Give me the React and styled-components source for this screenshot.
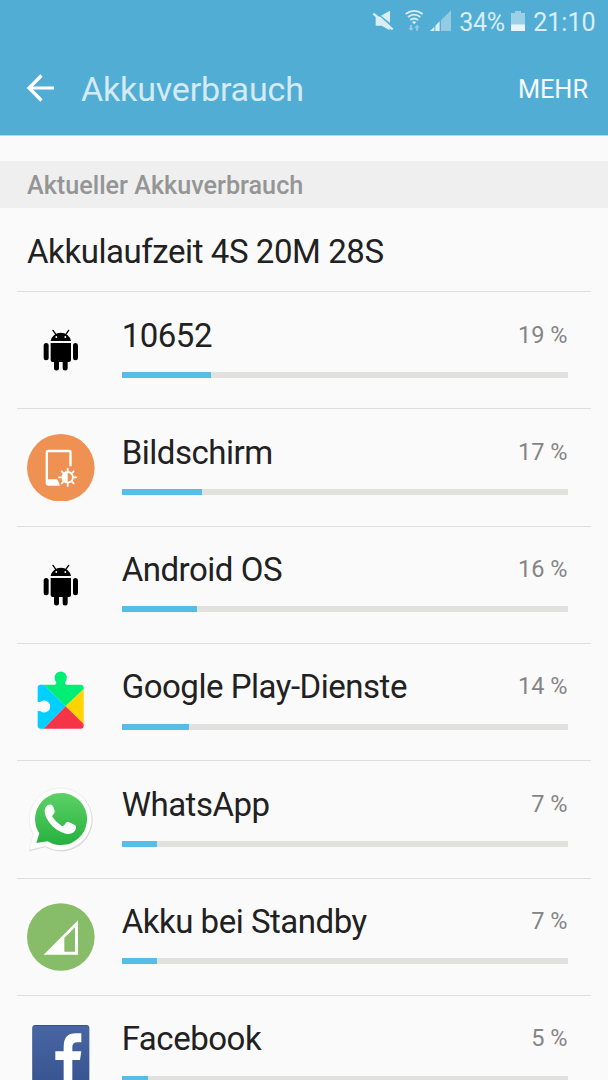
import React from 'react';
import styled, { createGlobalStyle } from 'styled-components';

const GlobalStyle = createGlobalStyle`
    html,
    body {
        margin: 0;
        padding: 0;
        background: #fafafa;
    }

    body {
        font-family: Roboto, 'Noto Sans', sans-serif;
        height: 1080px;
        overflow: hidden;
    }
`;

const Screen = styled.div`
    background: #fafafa;
    box-sizing: border-box;
    height: 1080px;
    overflow: hidden;
    width: 608px;
`;

const Header = styled.header`
    background: #52add4;
    border-bottom: 1px solid #c3d3da;
    box-sizing: border-box;
    height: 136px;
`;

const StatusBar = styled.div`
    align-items: center;
    color: #d9eef6;
    display: flex;
    height: 43px;
    justify-content: flex-end;
    padding-right: 12.5px;

    svg {
        display: block;
        flex: none;
        margin-bottom: 1px;
    }
`;

const StatusText = styled.span`
    font-size: 25px;
    letter-spacing: ${props => props.$spacing || 'normal'};
    line-height: 43px;
    margin-left: ${props => props.$gap};
    margin-right: ${props => props.$after || '0'};
    padding-top: 2px;
    white-space: nowrap;
`;

const AppBar = styled.div`
    align-items: center;
    box-sizing: border-box;
    display: flex;
    height: 92px;
    padding: 0 20px 0 26px;
`;

const Back = styled.button`
    appearance: none;
    background: none;
    border: 0;
    height: 30px;
    margin: 0 26px 3px 0;
    padding: 0;
    width: 29px;

    svg {
        display: block;
    }
`;

const Title = styled.h1`
    color: #d4ebf5;
    flex: 1;
    font-size: 34px;
    font-weight: 400;
    letter-spacing: -0.17px;
    line-height: 40px;
    margin: 0;
`;

const More = styled.button`
    appearance: none;
    background: none;
    border: 0;
    color: #f6fbfd;
    font-family: inherit;
    font-size: 25.3px;
    line-height: 40px;
    padding: 1px 0 0;
`;

const SectionTitle = styled.h2`
    background: #efefef;
    color: #959595;
    font-size: 25.2px;
    font-weight: 500;
    height: 47px;
    line-height: 50px;
    margin: 25px 0 0;
    padding-left: 27px;
`;

const Runtime = styled.div`
    box-sizing: border-box;
    color: #212121;
    font-size: 33px;
    height: 83px;
    letter-spacing: -0.43px;
    line-height: 40px;
    padding: 24px 0 0 27px;
`;

const List = styled.ul`
    list-style: none;
    margin: 0 17px;
    padding: 0;
`;

const Item = styled.li`
    align-items: center;
    border-top: 1px solid #dedede;
    box-sizing: border-box;
    display: flex;
    height: 117.33px;
    padding: 0 23.5px 0 10px;

    & > svg {
        display: block;
        flex: none;
        margin-right: 27px;
    }
`;

const Body = styled.div`
    align-self: flex-start;
    flex: 1;
    padding-top: 23.5px;
`;

const Labels = styled.div`
    align-items: flex-start;
    display: flex;
    height: 40px;
    justify-content: space-between;
`;

const Name = styled.span`
    color: #212121;
    font-size: 33px;
    letter-spacing: -0.48px;
    line-height: 40px;
`;

const Percent = styled.span`
    color: #858585;
    font-size: 23.5px;
    line-height: 38px;
`;

const Track = styled.div`
    background: #e1e1e0;
    height: 6px;
    margin-top: 16.25px;
`;

const Fill = styled.div`
    background: #56bee6;
    height: 100%;
`;

const IconBase = ({ viewBox, children }) => (
    <svg width="67.67" height="67.67" viewBox={viewBox}>
        {children}
    </svg>
);

const AndroidIcon = () => (
    <IconBase viewBox="21 -12 203 203">
        <path d="M92 63a31 30 0 0 1 61 0z" />
        <path
            d="M99 31l9 13M146 31l-9 13"
            stroke="#000"
            strokeWidth="4"
            strokeLinecap="round"
        />
        <circle cx="109" cy="51" r="2.8" fill="#fff" />
        <circle cx="136" cy="51" r="2.8" fill="#fff" />
        <path d="M92 69h61v51q0 6-6 6h-4v18a7.5 7.5 0 0 1-15 0v-18h-11v18a7.5 7.5 0 0 1-15 0v-18h-4q-6 0-6-6z" />
        <rect x="71" y="69" width="15" height="52" rx="7.5" />
        <rect x="159" y="69" width="15" height="52" rx="7.5" />
    </IconBase>
);

const ScreenIcon = () => (
    <IconBase viewBox="21 25 203 203">
        <circle cx="122.5" cy="126.5" r="101.5" fill="#ef9153" />
        <path
            fill="#fff"
            fillRule="evenodd"
            d="M84 72h64q7 0 7 7v43h-7V80H84v81h28l8 19H84q-7 0-7-7V79q0-7 7-7z"
        />
        <g stroke="#fff" strokeWidth="5.5" strokeLinecap="round">
            <path d="M143 129v6M143 175v6M117 155h6M163 155h6M125 137l4 4M157 169l4 4M161 137l-4 4M129 169l-4 4" />
        </g>
        <circle
            cx="143"
            cy="155"
            r="16"
            fill="#ef9153"
            stroke="#fff"
            strokeWidth="5.5"
        />
        <path d="M143 139a16 16 0 0 0 0 32z" fill="#fff" />
    </IconBase>
);

const PlayServicesIcon = () => (
    <IconBase viewBox="21 25 203 203">
        <path
            d="M72 75L137 140 71 207H62q-9 0-9-9v-44q6-1 9 1a18 18 0 1 0 0-29q-4 2-9 0V84q0-9 9-9z"
            fill="#00d0ff"
        />
        <path
            d="M72 75h32q7-2 4-9a18.5 18.5 0 1 1 28 0q-3 7 4 9h43q5 0 8 6v7L137 140z"
            fill="#00ee76"
        />
        <path d="M191 88v105L137 140z" fill="#ffd400" />
        <path d="M71 207l66-67 54 53v5q0 9-9 9z" fill="#f63448" />
    </IconBase>
);

const WhatsAppIcon = () => (
    <IconBase viewBox="22 17 203 203">
        <defs>
            <linearGradient id="wa" x1="0" y1="0" x2="0" y2="1">
                <stop offset="0" stopColor="#5dd167" />
                <stop offset="1" stopColor="#26b13d" />
            </linearGradient>
        </defs>
        <path
            d="M29 213l13-49a94 94 0 1 1 35 36z"
            fill="#bdbdbd"
            opacity=".65"
        />
        <path
            d="M28 210l13-48a93.5 93.5 0 1 1 36 36z"
            fill="#fff"
            stroke="#dedede"
            strokeWidth="1.5"
        />
        <path d="M50 188l9-29a78 78 0 1 1 25 24z" fill="url(#wa)" />
        <path
            d="M83 75q7-4 12-2 4 1 6 7l4 12q1 5-3 9l-5 7q10 17 28 28 5 3 9-2l6-8q3-3 7-1l20 10q3 2 2 7-2 13-13 17-14 5-30-3-31-14-46-44-5-10-5-20 0-10 8-17z"
            fill="#fff"
        />
    </IconBase>
);

const StandbyIcon = () => (
    <IconBase viewBox="21 22 203 203">
        <circle cx="122.5" cy="124" r="101.5" fill="#87bd68" />
        <path
            d="M71 177L174 74v103zM133 127v41h32V95z"
            fill="#fff"
            fillRule="evenodd"
        />
    </IconBase>
);

const FacebookIcon = () => (
    <IconBase viewBox="21 30 203 203">
        <defs>
            <linearGradient id="fb" x1="0" y1="0" x2="0" y2="1">
                <stop offset="0" stopColor="#4866a3" />
                <stop offset="1" stopColor="#385592" />
            </linearGradient>
        </defs>
        <rect x="37" y="45" width="171" height="171" rx="9" fill="#304a83" />
        <rect x="38" y="47" width="169" height="168" rx="8" fill="url(#fb)" />
        <path
            d="M131 216v-66h-25v-26h25v-14q0-40 36-40h17v27h-12q-15 0-15 14v13h27l-4 26h-23v66z"
            fill="#fff"
        />
    </IconBase>
);

const apps = [
    { name: '10652', percent: 19, fill: 20, icon: AndroidIcon },
    { name: 'Bildschirm', percent: 17, fill: 18, icon: ScreenIcon },
    { name: 'Android OS', percent: 16, fill: 17, icon: AndroidIcon },
    { name: 'Google Play-Dienste', percent: 14, fill: 15, icon: PlayServicesIcon },
    { name: 'WhatsApp', percent: 7, fill: 8, icon: WhatsAppIcon },
    { name: 'Akku bei Standby', percent: 7, fill: 8, icon: StandbyIcon },
    { name: 'Facebook', percent: 5, fill: 6, icon: FacebookIcon }
];

// mute, wifi and signal share one drawing, the battery sits between the texts
const StatusIcons = () => (
    <svg width="84" height="24" viewBox="30 27 252 72" fill="#d9eef6">
        <path d="M44 50h14l28 26v15L62 77H44z" />
        <path d="M60 47l27-15v37z" />
        <path d="M37 41l58 47" stroke="#d9eef6" strokeWidth="7" />
        <g fill="none" stroke="#d9eef6" strokeWidth="5.5">
            <path d="M134 42q25-19 51 0M141 51q18-14 37 0M148 60q11-9 23 0" />
        </g>
        <path d="M153 66q6-4 13 0l-6.5 7z" />
        <g fill="#93cbe3">
            <path d="M147 75h6v9h5l-8 9-8-9h5zM165 92h6v-9h5l-8-9-8 9h5z" />
            <path d="M240 61l30-30v62h-30z" />
        </g>
        <path d="M207 93l13-13v13zM223 77l13-13v29h-13z" />
    </svg>
);

const Battery = () => (
    <svg width="14" height="20" viewBox="0 0 14 20">
        <path d="M4 0h6v2h4v18H0V2h4z" fill="#9bd0e6" />
        <path d="M0 13.5h14V20H0z" fill="#e9f5fa" />
    </svg>
);

const AppRow = ({ name, percent, fill, icon: Icon }) => (
    <Item>
        <Icon />
        <Body>
            <Labels>
                <Name>{name}</Name>
                <Percent>{percent} %</Percent>
            </Labels>
            <Track>
                <Fill style={{ width: `${fill}%` }} />
            </Track>
        </Body>
    </Item>
);

const App = () => (
    <Screen>
        <GlobalStyle />
        <Header>
            <StatusBar>
                <StatusIcons />
                <StatusText $gap="4px" $after="6px" $spacing="-0.3px">
                    34%
                </StatusText>
                <Battery />
                <StatusText $gap="8.5px">21:10</StatusText>
            </StatusBar>
            <AppBar>
                <Back type="button" aria-label="Zurück">
                    <svg
                        width="29"
                        height="30"
                        viewBox="0 0 29 30"
                        fill="none"
                        stroke="#fff"
                        strokeWidth="3.2">
                        <path d="M28 15H3M15.5 2.5L3 15l12.5 12.5" />
                    </svg>
                </Back>
                <Title>Akkuverbrauch</Title>
                <More type="button">MEHR</More>
            </AppBar>
        </Header>
        <SectionTitle>Aktueller Akkuverbrauch</SectionTitle>
        <Runtime>Akkulaufzeit 4S 20M 28S</Runtime>
        <List>
            {apps.map((app, idx) => (
                <AppRow key={idx} {...app} />
            ))}
        </List>
    </Screen>
);

export default App;
